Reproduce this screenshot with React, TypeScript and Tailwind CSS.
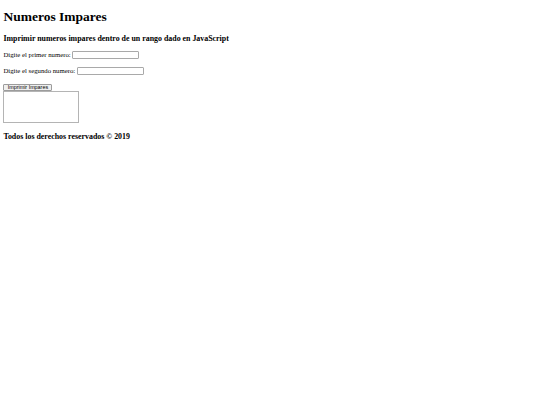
import React from "react";

export default function App() {
  return (
    <div className="min-h-screen bg-white px-[3.4px] pt-[9px] text-black [font-family:'Liberation_Serif','Times_New_Roman',serif]">
      <h1 className="text-[13.5px] font-bold leading-[15.5px]">Numeros Impares</h1>
      <h3 className="mt-[9px] text-[7.9px] font-bold leading-[9px]">
        Imprimir numeros impares dentro de un rango dado en JavaScript
      </h3>

      <p className="mt-[7.9px] flex items-center text-[6.75px] leading-[9.3px]">
        Digite el primer numero:
        <input
          type="text"
          className="ml-[1.7px] h-[8px] w-[67px] rounded-[1px] border border-[#a9a9a9] bg-white"
        />
      </p>
      <p className="mt-[6.75px] flex items-center text-[6.75px] leading-[9.3px]">
        Digite el segundo numero:
        <input
          type="text"
          className="ml-[1.7px] h-[8px] w-[67px] rounded-[1px] border border-[#a9a9a9] bg-white"
        />
      </p>

      <div className="mt-[8px] flex flex-col items-start">
        <button className="flex h-[7px] w-[49px] items-center justify-center rounded-[1px] border border-[#9c9c9c] bg-[#efefef] text-[5.4px] leading-none text-black [font-family:'Liberation_Sans',Arial,sans-serif]">
          Imprimir Impares
        </button>
        <textarea className="h-[32.5px] w-[76px] resize-none border border-[#b4b4b4] bg-white" />
      </div>

      <h4 className="mt-[9px] text-[7.9px] font-bold leading-[9px]">
        Todos los derechos reservados © 2019
      </h4>
    </div>
  );
}
